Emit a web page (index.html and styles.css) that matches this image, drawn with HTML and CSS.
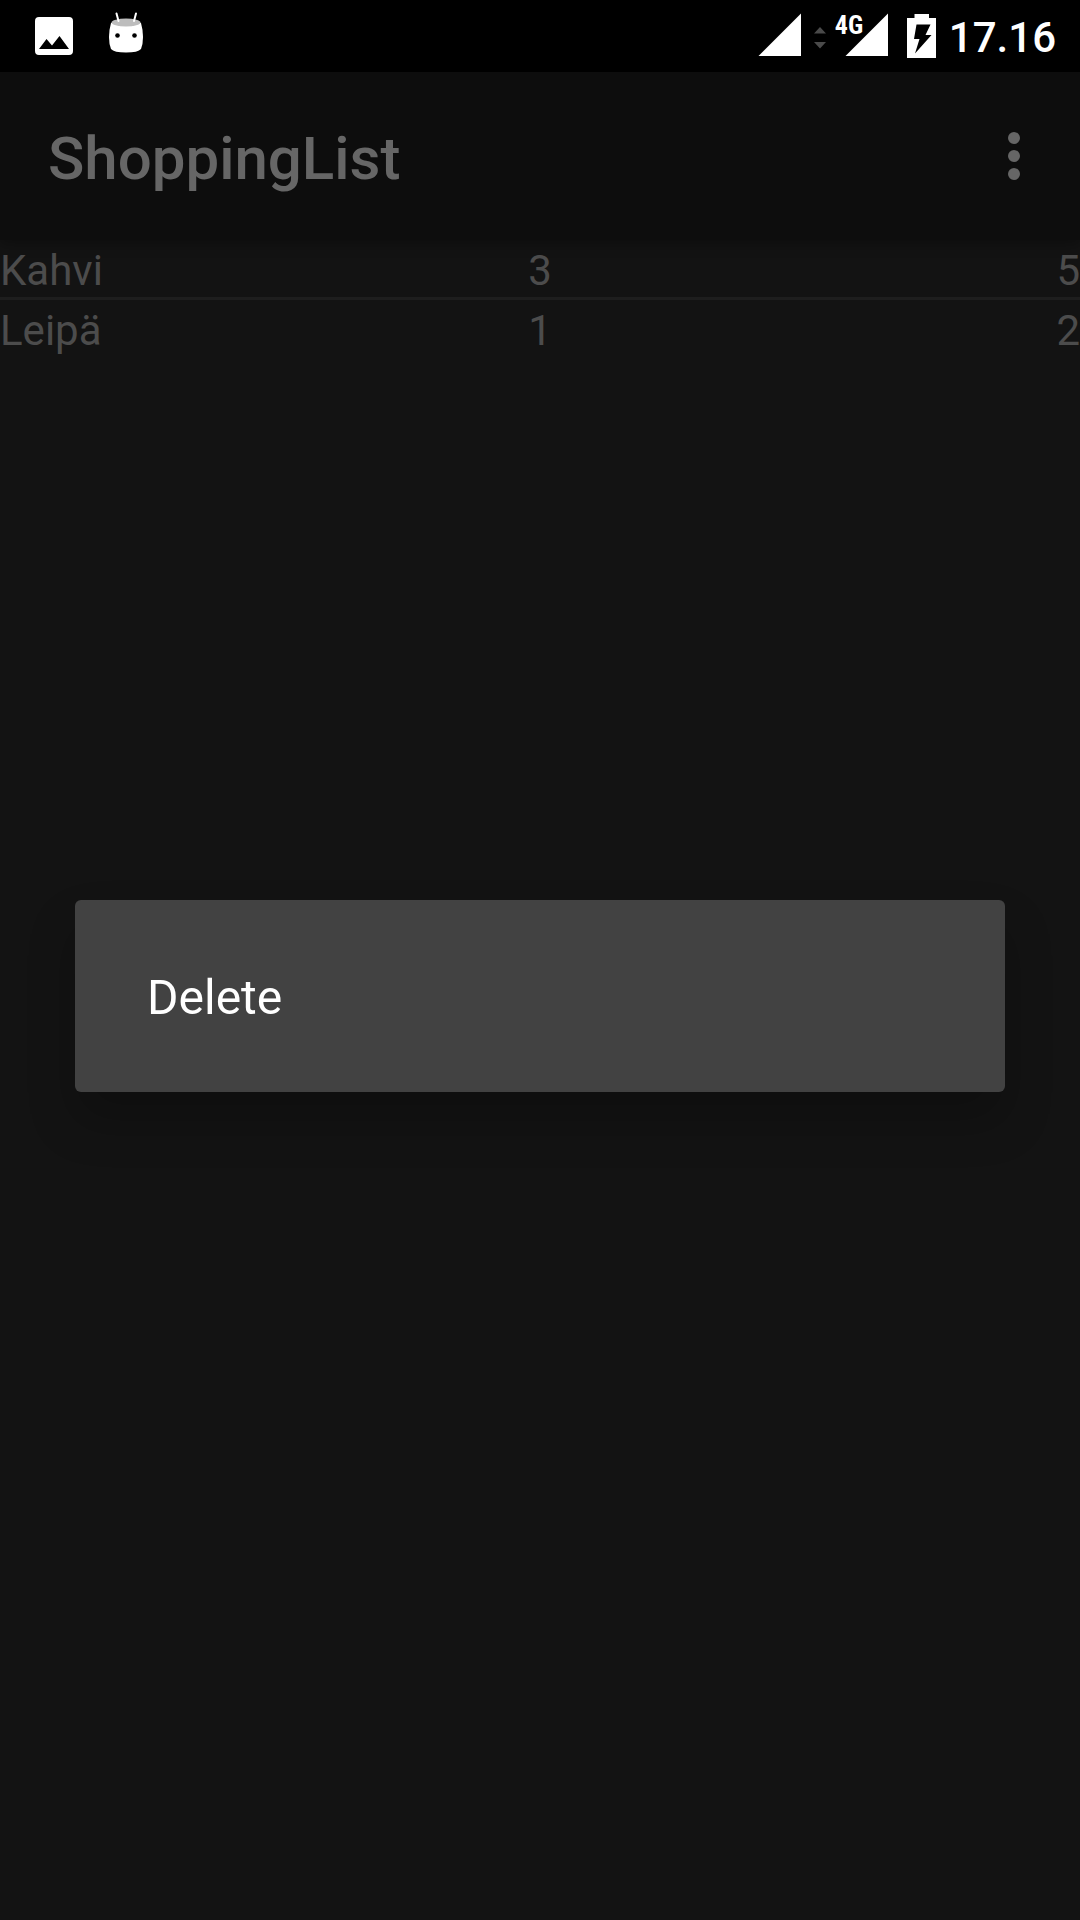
FILE: index.html
```html
<!DOCTYPE html>
<html lang="fi">
<head>
<meta charset="utf-8">
<meta name="viewport" content="width=device-width, initial-scale=1">
<title>ShoppingList</title>
<link rel="stylesheet" href="styles.css">
</head>
<body>
<header class="status-bar">
  <div class="notifications">
    <svg width="38" height="38" viewBox="0 0 38 38" aria-hidden="true">
      <path fill="#fff" fill-rule="evenodd" d="M4 0H34Q38 0 38 4V34Q38 38 34 38H4Q0 38 0 34V4Q0 0 4 0ZM4 32H34L24.500 19L17 28.500L11.500 22Z"/>
    </svg>
    <svg width="34" height="41" viewBox="0 0 34 41" aria-hidden="true">
      <path fill="#fff" d="M2 11Q17 4 32 11Q34 18 34 25Q34 32 32 37Q29 40.500 17 40.500Q5 40.500 2 37Q0 32 0 25Q0 18 2 11Z"/>
      <ellipse cx="17" cy="10.500" rx="14.500" ry="4" fill="#bdbdbd"/>
      <path stroke="#fff" stroke-width="2" stroke-linecap="round" d="M7.500 1.500L9.500 9M27 1.500L25 9"/>
      <circle cx="8.500" cy="23.500" r="2.300"/>
      <circle cx="25.500" cy="23.500" r="2.300"/>
    </svg>
  </div>
  <div class="system">
    <svg width="44" height="44" viewBox="0 0 44 44" aria-hidden="true"><path fill="#fff" d="M.5 43H43V.5Z"/></svg>
    <svg width="12" height="44" viewBox="0 0 12 44" aria-hidden="true"><path fill="#4a4a4a" d="M0 20.500L6 14L12 20.500ZM0 29H12L6 35.500Z"/></svg>
    <div class="mobile">
      <span class="network">4G</span>
      <svg width="44" height="44" viewBox="0 0 44 44" aria-hidden="true"><path fill="#fff" d="M.5 43H43V.5Z"/></svg>
    </div>
    <svg width="36" height="45" viewBox="0 0 36 45" aria-hidden="true">
      <path fill="#fff" d="M13.500 1H28V5H35V45H6V5H13.500Z"/>
      <path d="M15.500 11.500H29.500L24.500 22H30.500L14 40.500L18.500 26H13Z"/>
    </svg>
    <time class="clock">17.16</time>
  </div>
</header>
<div class="app-bar">
  <h1 class="title">ShoppingList</h1>
  <button class="overflow" type="button" aria-label="Lisää">
    <svg width="12" height="48" viewBox="0 0 12 48" aria-hidden="true" fill="#666"><circle cx="6" cy="6" r="6"/><circle cx="6" cy="24" r="6"/><circle cx="6" cy="42" r="6"/></svg>
  </button>
</div>
<main class="content">
  <table class="items">
    <tbody>
      <tr><td>Kahvi</td><td>3</td><td>5</td></tr>
      <tr><td>Leipä</td><td>1</td><td>2</td></tr>
    </tbody>
  </table>
</main>
<div class="overlay">
  <div class="dialog" role="dialog" aria-label="Delete">
    <button class="action" type="button">Delete</button>
  </div>
</div>
</body>
</html>
```
FILE: styles.css
```css
* {
  box-sizing: border-box;
}

body {
  margin: 0;
  min-height: 100vh;
  background: #131313;
  color: #4c4c4c;
  font-family: Roboto, "Noto Sans", sans-serif;
}

svg {
  display: block;
}

.status-bar {
  display: flex;
  justify-content: space-between;
  height: 72px;
  padding: 0 24px 0 35px;
  background: #000;
  color: #fff;
}

.notifications {
  display: flex;
  align-items: center;
  gap: 36px;
}

.notifications svg:last-child {
  margin-bottom: 8px;
}

.system {
  display: flex;
  align-items: flex-start;
  gap: 12px;
  padding-top: 13px;
}

.mobile {
  position: relative;
  display: flex;
  justify-content: flex-end;
  width: 51px;
}

.network {
  position: absolute;
  top: 0;
  left: -3px;
  font-family: "Roboto Condensed", "Liberation Sans Narrow", Roboto, sans-serif;
  font-size: 26px;
  font-weight: 700;
  line-height: 24px;
}

.clock {
  font-size: 42px;
  font-weight: 500;
  line-height: 50px;
}

.app-bar {
  position: relative;
  display: flex;
  align-items: center;
  justify-content: space-between;
  height: 168px;
  padding: 0 48px;
  background: #0d0d0d;
  color: #666;
  box-shadow: 0 4px 12px rgba(0, 0, 0, 0.3);
}

.title {
  margin: 0;
  padding-top: 6px;
  font-size: 60px;
  font-weight: 500;
  line-height: 72px;
}

.overflow {
  padding: 12px;
  border: 0;
  background: none;
}

.items {
  width: 100%;
  table-layout: fixed;
  border-spacing: 0;
  font-size: 42px;
  line-height: 53px;
}

.items td {
  padding: 4px 0 0;
}

.items td:nth-child(2) {
  text-align: center;
}

.items td:nth-child(3) {
  text-align: right;
}

.items tr:not(:last-child) td {
  border-bottom: 3px solid #1e1e1e;
}

.overlay {
  position: fixed;
  inset: 72px 0 0;
  display: flex;
  align-items: center;
  padding: 0 75px;
}

.dialog {
  flex: 1;
  padding: 24px 0;
  border-radius: 6px;
  background: #424242;
  box-shadow: 0 28px 48px rgba(0, 0, 0, 0.22);
}

.action {
  display: block;
  width: 100%;
  height: 144px;
  padding: 2px 72px 0;
  border: 0;
  background: none;
  color: #fff;
  font: inherit;
  font-size: 48px;
  text-align: left;
}
```
